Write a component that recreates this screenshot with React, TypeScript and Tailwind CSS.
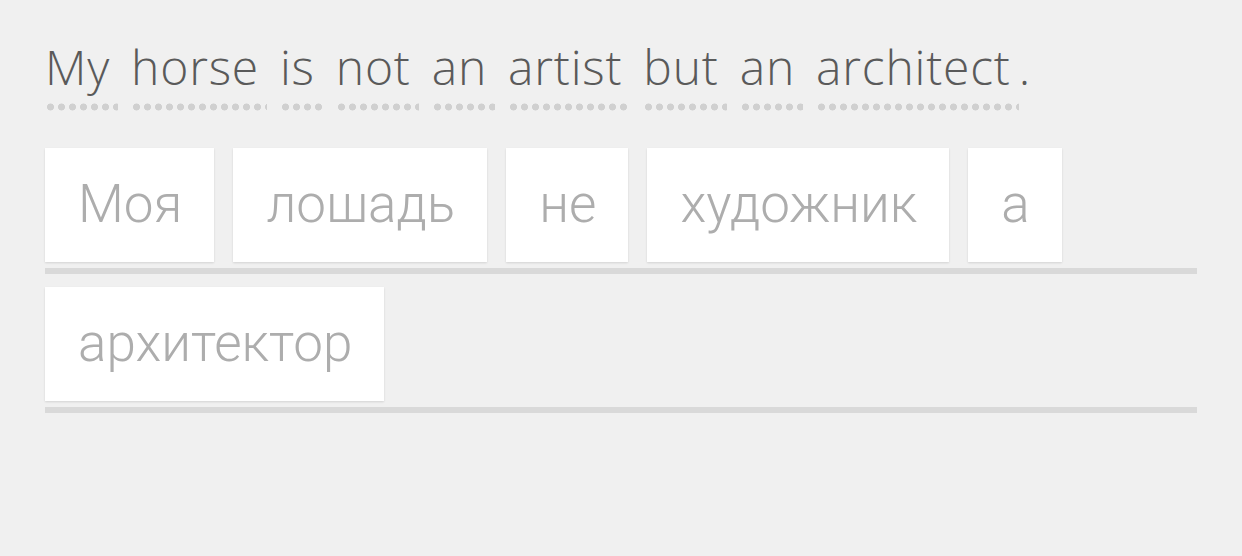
import React from 'react';

const sentence = ['My', 'horse', 'is', 'not', 'an', 'artist', 'but', 'an', 'architect'];

const rows = [
  ['Моя', 'лошадь', 'не', 'художник', 'а'],
  ['архитектор'],
];

const Tile = ({ word }: { word: string }) => (
  <div className="h-[114px] flex items-center bg-white pl-[33px] pr-[32px] shadow-[0_1px_2px_rgba(0,0,0,0.12)] text-[53px] font-light text-[#adadad] font-['Roboto',sans-serif]">
    {word}
  </div>
);

const App = () => {
  return (
    <div className="min-h-[556px] w-full bg-[#f0f0f0] px-[45px] pt-[39px]">
      <div className="flex gap-[13px] text-[48px] tracking-[0.8px] text-[#5a5a5a] font-light font-['Open_Sans',sans-serif] whitespace-nowrap">
        {sentence.map((w, i) => (
          <span key={i} className="flex">
            <span className="block pr-[8px] pb-[16px] bg-[radial-gradient(circle,#d0d0d0_3.2px,transparent_3.8px)] bg-[length:11px_8px] bg-repeat-x bg-[position:0_100%] leading-[56px]">
              {w}
            </span>
            {i === sentence.length - 1 && <span className="block leading-[56px]">.</span>}
          </span>
        ))}
      </div>
      <div className="mt-[37px] w-[1152px]">
        {rows.map((row, i) => (
          <div
            key={i}
            className={`flex gap-[19px] pb-[6px] border-b-[6px] border-[#d9d9d9] ${i > 0 ? 'mt-[13px]' : ''}`}
          >
            {row.map((w) => (
              <Tile key={w} word={w} />
            ))}
          </div>
        ))}
      </div>
    </div>
  );
};

export default App;
